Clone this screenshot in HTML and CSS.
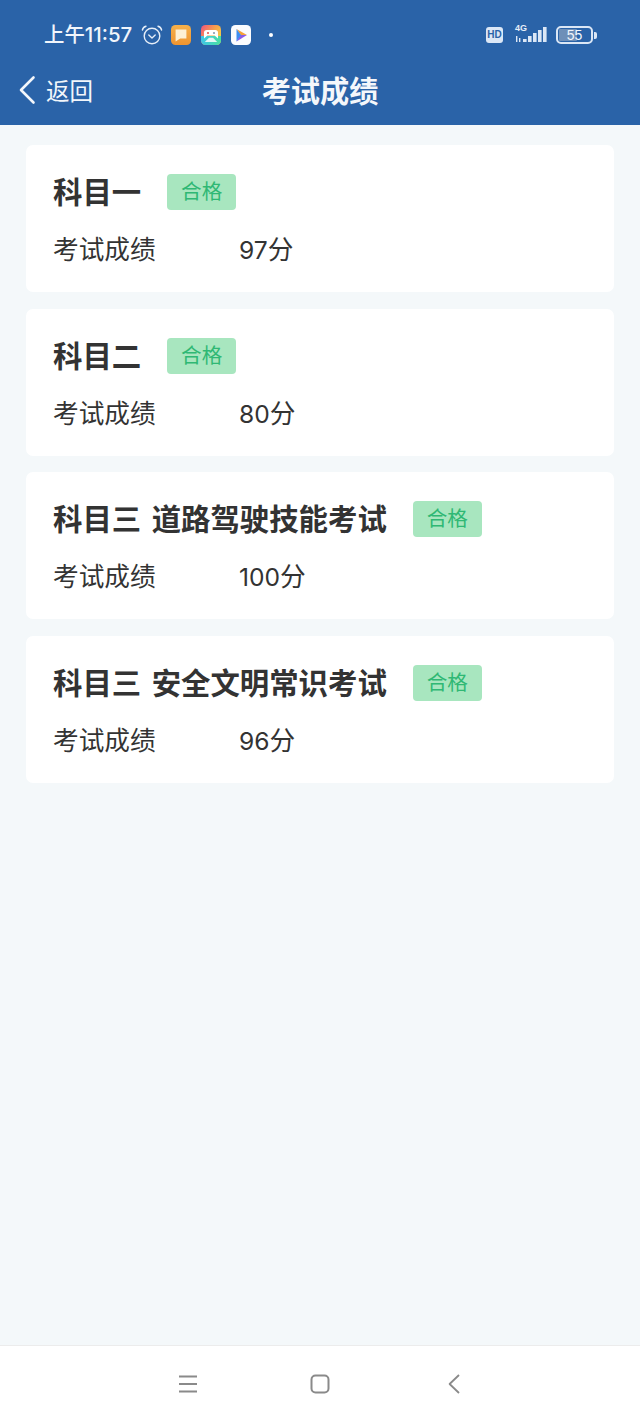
FILE: index.html
```html
<!DOCTYPE html>
<html lang="zh-CN">
<head>
<meta charset="utf-8">
<title>考试成绩</title>
<link rel="stylesheet" href="styles.css">
</head>
<body>
<div class="app">
  <header class="header">
    <div class="status">
      <div class="status-left">
        <span class="time">上午11:57</span>
        <svg class="alarm" width="22" height="22" viewBox="0 0 22 22" fill="none" stroke="#e6eef8" stroke-width="1.4" stroke-linecap="round" stroke-linejoin="round">
          <circle cx="11" cy="12" r="7.8"/>
          <path d="M7.8 11 11 14l3.2-3"/>
          <path d="M1.4 6Q2 3 5 2.2M20.6 6Q20 3 17 2.2"/>
        </svg>
        <svg class="app-icon" width="20" height="20" viewBox="0 0 20 20">
          <defs>
            <linearGradient id="noteBg" x1="0" y1="0" x2="0" y2="1">
              <stop offset="0" stop-color="#f6b04a"/>
              <stop offset="1" stop-color="#ee9430"/>
            </linearGradient>
          </defs>
          <rect width="20" height="20" rx="4.5" fill="url(#noteBg)"/>
          <path d="M4.6 4.6h10.8v9H9.2L4.6 16.4z" fill="#fdf0d4"/>
        </svg>
        <svg class="app-icon" width="20" height="20" viewBox="0 0 20 20">
          <defs>
            <linearGradient id="gameBg" x1="0" y1="0" x2="1" y2="0.7">
              <stop offset="0" stop-color="#f0527e"/>
              <stop offset=".55" stop-color="#f6a24a"/>
              <stop offset="1" stop-color="#f2d24a"/>
            </linearGradient>
            <linearGradient id="gameBase" x1="0" y1="0" x2="1" y2="0">
              <stop offset="0" stop-color="#3fc6e8"/>
              <stop offset="1" stop-color="#4adfa0"/>
            </linearGradient>
          </defs>
          <rect width="20" height="20" rx="4.5" fill="url(#gameBg)"/>
          <path d="M0 11h20v4.5a4.5 4.5 0 0 1-4.5 4.5h-11A4.5 4.5 0 0 1 0 15.5z" fill="url(#gameBase)"/>
          <path d="M3 13.4V7.600Q3 5 5.800 5h8.400Q17 5 17 7.600v5.800l-3.400-2.800H6.400z" fill="#fff"/>
          <path d="M3.800 17 8 12.800h4l4.200 4.200z" fill="#fff" opacity=".85"/>
          <circle cx="7" cy="8" r="1.100" fill="#e2574f"/>
          <circle cx="13" cy="8" r="1.100" fill="#8a9ab0"/>
        </svg>
        <svg class="app-icon" width="20" height="20" viewBox="0 0 20 20">
          <rect width="20" height="20" rx="4.5" fill="#fbfcfe"/>
          <path d="M5.500 4 16 10H9.500z" fill="#f5a13a"/>
          <path d="M16 10 5.500 16.500 9 10z" fill="#8a5ce8"/>
          <path d="M5.500 4 10 10l-4.500 6.500z" fill="#3f8df0"/>
        </svg>
        <span class="dot"></span>
      </div>
      <div class="status-right">
        <span class="hd">HD</span>
        <div class="signal">
          <span class="net">4G</span>
          <svg width="34" height="18" viewBox="0 0 34 18" fill="#dbe7f6">
            <rect x="1" y="10" width="1.4" height="6"/>
            <rect x="4" y="12" width="1.4" height="4"/>
            <rect x="8" y="13" width="3.6" height="3" />
            <rect x="13" y="10" width="3.6" height="6"/>
            <rect x="18" y="7" width="3.6" height="9"/>
            <rect x="23" y="4" width="3.6" height="12"/>
            <rect x="28" y="1" width="3.6" height="15"/>
          </svg>
        </div>
        <div class="battery">
          <div class="battery-body"><span class="battery-fill"></span><span class="battery-num">55</span></div>
          <span class="battery-cap"></span>
        </div>
      </div>
    </div>
    <nav class="nav">
      <a class="back">
        <svg width="18" height="30" viewBox="0 0 18 30" fill="none" stroke="#f2f6fb" stroke-width="2.6" stroke-linecap="round" stroke-linejoin="round"><path d="M15.5 2.5 3 15l12.5 12.5"/></svg>
        <span>返回</span>
      </a>
      <h1 class="nav-title">考试成绩</h1>
    </nav>
  </header>

  <main class="list">
    <section class="card">
      <div class="card-head"><h2 class="subject">科目一</h2><span class="badge">合格</span></div>
      <div class="row"><span class="label">考试成绩</span><span class="value"><span class="num">97</span>分</span></div>
    </section>
    <section class="card">
      <div class="card-head"><h2 class="subject">科目二</h2><span class="badge">合格</span></div>
      <div class="row"><span class="label">考试成绩</span><span class="value"><span class="num">80</span>分</span></div>
    </section>
    <section class="card">
      <div class="card-head"><h2 class="subject">科目三 道路驾驶技能考试</h2><span class="badge">合格</span></div>
      <div class="row"><span class="label">考试成绩</span><span class="value"><span class="num">100</span>分</span></div>
    </section>
    <section class="card">
      <div class="card-head"><h2 class="subject">科目三 安全文明常识考试</h2><span class="badge">合格</span></div>
      <div class="row"><span class="label">考试成绩</span><span class="value"><span class="num">96</span>分</span></div>
    </section>
  </main>

  <footer class="softkeys">
    <svg width="18" height="18" viewBox="0 0 18 18" fill="none" stroke="#8a8a8a" stroke-width="1.8"><path d="M0 1.5h18M0 9h18M0 16.5h18"/></svg>
    <svg class="home-key" width="20" height="20" viewBox="0 0 20 20" fill="none" stroke="#8a8a8a" stroke-width="2"><rect x="1.5" y="1.5" width="17" height="17" rx="4"/></svg>
    <svg width="12" height="20" viewBox="0 0 12 20" fill="none" stroke="#8a8a8a" stroke-width="1.8" stroke-linejoin="round"><path d="M11 1 1.6 10 11 19"/></svg>
  </footer>
</div>
</body>
</html>
```
FILE: styles.css
```css
* { box-sizing: border-box; }

html, body { margin: 0; padding: 0; }

body {
  font-family: "Noto Sans CJK SC", "Noto Sans", sans-serif;
  color: #333;
  background: #f4f8fa;
}

.app {
  width: 640px;
  height: 1422px;
  display: flex;
  flex-direction: column;
}

/* Blue header: status bar plus page title */
.header {
  height: 125px;
  flex: none;
  background: #2a63a8;
  color: #fff;
  padding-top: 21px;
}

.status {
  height: 28px;
  padding: 0 44px;
  display: flex;
  justify-content: space-between;
  align-items: center;
}

.status-left, .status-right { display: flex; align-items: center; }

.time {
  font-family: Inter, "Noto Sans CJK SC", sans-serif;
  font-size: 20.4px;
  line-height: 28px;
  font-weight: 500;
  color: #f1f5fb;
  margin-right: 8px;
  width: 89px;
  white-space: nowrap;
}

.alarm { margin-right: 8px; }
.app-icon { margin-right: 10px; }
.app-icon:nth-of-type(4) { margin-right: 0; }

.dot {
  width: 4px;
  height: 4px;
  border-radius: 50%;
  background: #fff;
  margin-left: 18px;
}

.status-right { margin-right: -1px; }

.hd {
  width: 17px;
  height: 16px;
  border-radius: 3px;
  background: #dbe7f6;
  color: #2a63a8;
  font: 700 10px/16px "Liberation Sans", sans-serif;
  text-align: center;
  margin-right: 12px;
}

.signal {
  position: relative;
  width: 34px;
  height: 18px;
  margin-right: 7px;
}

.signal svg { display: block; }

.net {
  position: absolute;
  left: 0;
  top: -3px;
  font: 700 9px/10px "Liberation Sans", sans-serif;
  color: #e6eef8;
}

.battery { display: flex; align-items: center; }

.battery-body {
  position: relative;
  width: 37px;
  height: 18px;
  border: 2px solid #dbe7f6;
  border-radius: 5px;
  overflow: hidden;
}

.battery-fill {
  position: absolute;
  left: 1px;
  top: 1px;
  bottom: 1px;
  width: 18px;
  background: #6e8fb8;
  border-radius: 1px;
}

.battery-num {
  position: absolute;
  inset: 0;
  text-align: center;
  font: 400 14px/14px "Liberation Sans", sans-serif;
  color: #f1f5fb;
}

.battery-cap {
  width: 3px;
  height: 7px;
  margin-left: 1px;
  background: #dbe7f6;
  border-radius: 0 2px 2px 0;
}

.nav {
  position: relative;
  height: 76px;
  display: flex;
  align-items: center;
  justify-content: center;
  padding-top: 4px;
}

.back {
  position: absolute;
  left: 18px;
  top: 26px;
  display: flex;
  align-items: center;
  gap: 10px;
  font-size: 23.5px;
  line-height: 30px;
  color: #f2f6fb;
}

.back svg { display: block; }

.nav-title {
  margin: 0;
  font-size: 29.2px;
  line-height: 40px;
  font-weight: 700;
  color: #f4f7fb;
}

/* Result cards */
.list {
  flex: 1;
  padding: 20px 26px 0;
  display: flex;
  flex-direction: column;
  gap: 16.67px;
}

.card {
  height: 147px;
  padding: 26px 27px 0;
  background: #fff;
  border-radius: 7px;
}

.card-head {
  display: flex;
  align-items: flex-start;
  height: 38px;
}

.subject {
  margin: 0;
  font-size: 29.4px;
  line-height: 38px;
  font-weight: 700;
  word-spacing: 3.8px;
  color: #333;
  white-space: nowrap;
}

.badge {
  width: 69px;
  height: 36px;
  margin: 3px 0 0 26px;
  background: #a8e6bf;
  border-radius: 4px;
  color: #2fb874;
  font-size: 20.6px;
  line-height: 33px;
  text-align: center;
}

.row {
  display: flex;
  margin-top: 20px;
  font-size: 25.7px;
  line-height: 38px;
  color: #333;
}

.label { width: 186px; flex: none; }

.num { font-family: Inter, sans-serif; font-size: 24.6px; line-height: 1; }

/* System navigation keys */
.softkeys {
  height: 77px;
  flex: none;
  background: #fff;
  border-top: 1px solid #ececec;
  padding: 0 0 0 179px;
  display: flex;
  align-items: center;
  gap: 113px;
}

.softkeys svg { display: block; }

.home-key { margin-right: 5px; }
```
